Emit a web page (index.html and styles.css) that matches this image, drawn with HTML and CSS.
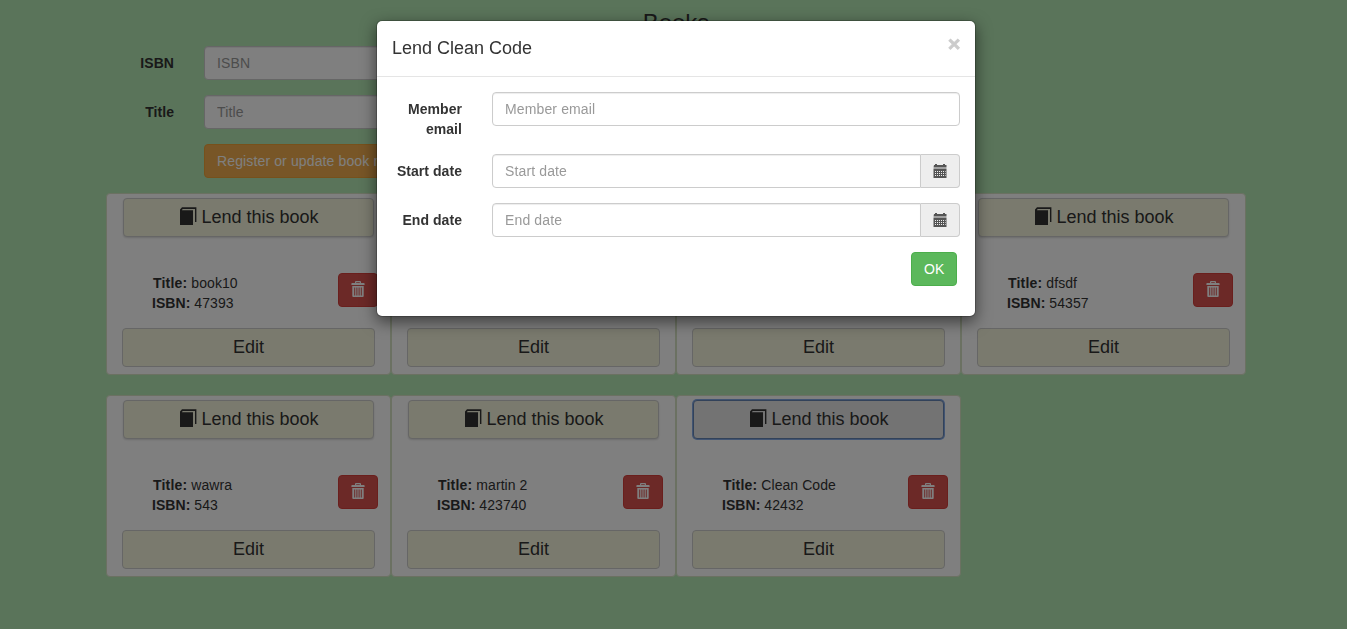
FILE: index.html
```html
<!DOCTYPE html>
<html lang="en">
<head>
<meta charset="utf-8">
<title>Books</title>
<link rel="stylesheet" href="styles.css">
</head>
<body>
<svg class="sprite" aria-hidden="true">
  <symbol id="book" viewBox="0 0 18 18"><path d="M1 2.6L3 .2H17.4V15H16V2H3.6L3 3.2H14V18H1Z"/></symbol>
  <symbol id="trash" viewBox="0 0 14 16"><path fill-rule="evenodd" d="M4 2V1Q4 0 5 0H9Q10 0 10 1V2H13Q13.6 2 13.6 3V4H.4V3Q.4 2 1 2ZM5.2 2H8.8V1.2H5.2ZM1.3 5H12.7V15Q12.7 16 11.8 16H2.2Q1.3 16 1.3 15ZM3.2 6.4V14.4H4.2V6.4ZM5.4 6.4V14.4H6.4V6.4ZM7.6 6.4V14.4H8.6V6.4ZM9.8 6.4V14.4H10.8V6.4Z"/></symbol>
  <symbol id="calendar" viewBox="0 0 14 14"><path fill-rule="evenodd" d="M1 1H2V0H4V1H10V0H12V1H13.5V3.6H.5ZM.5 4.6H13.5V14H.5ZM2 7V8H3V7ZM4 7V8H5V7ZM6 7V8H7V7ZM8 7V8H9V7ZM10 7V8H11V7ZM12 7V8H12.6V7ZM2 9V10H3V9ZM4 9V10H5V9ZM6 9V10H7V9ZM8 9V10H9V9ZM10 9V10H11V9ZM12 9V10H12.6V9ZM2 11V12H3V11ZM4 11V12H5V11ZM6 11V12H7V11ZM8 11V12H9V11ZM10 11V12H11V11ZM12 11V12H12.6V11Z"/></symbol>
</svg>
<main class="page">
  <h3 class="heading">Books</h3>
  <form class="book-form">
    <label class="label">ISBN</label><input class="control" placeholder="ISBN">
    <label class="label">Title</label><input class="control" placeholder="Title">
    <button class="btn btn-warning" type="button">Register or update book now</button>
  </form>
  <section class="books">
    <article class="card">
      <button class="wide lend"><svg class="i-book"><use href="#book"/></svg>Lend this book</button>
      <div class="info"><p><b class="key">Title:</b> book10<br><b>ISBN:</b> 47393</p><button class="btn btn-danger"><svg class="i-trash"><use href="#trash"/></svg></button></div>
      <button class="wide">Edit</button>
    </article>
    <article class="card card-short"><button class="wide">Edit</button></article>
    <article class="card card-short"><button class="wide">Edit</button></article>
    <article class="card">
      <button class="wide lend"><svg class="i-book"><use href="#book"/></svg>Lend this book</button>
      <div class="info"><p><b class="key">Title:</b> dfsdf<br><b>ISBN:</b> 54357</p><button class="btn btn-danger"><svg class="i-trash"><use href="#trash"/></svg></button></div>
      <button class="wide">Edit</button>
    </article>
    <article class="card">
      <button class="wide lend"><svg class="i-book"><use href="#book"/></svg>Lend this book</button>
      <div class="info"><p><b class="key">Title:</b> wawra<br><b>ISBN:</b> 543</p><button class="btn btn-danger"><svg class="i-trash"><use href="#trash"/></svg></button></div>
      <button class="wide">Edit</button>
    </article>
    <article class="card">
      <button class="wide lend"><svg class="i-book"><use href="#book"/></svg>Lend this book</button>
      <div class="info"><p><b class="key">Title:</b> martin 2<br><b>ISBN:</b> 423740</p><button class="btn btn-danger"><svg class="i-trash"><use href="#trash"/></svg></button></div>
      <button class="wide">Edit</button>
    </article>
    <article class="card">
      <button class="wide lend active"><svg class="i-book"><use href="#book"/></svg>Lend this book</button>
      <div class="info"><p><b class="key">Title:</b> Clean Code<br><b>ISBN:</b> 42432</p><button class="btn btn-danger"><svg class="i-trash"><use href="#trash"/></svg></button></div>
      <button class="wide">Edit</button>
    </article>
  </section>
</main>
<div class="backdrop"></div>
<div class="modal" role="dialog">
  <header class="modal-header"><h4 class="modal-title">Lend Clean Code</h4><button class="close">×</button></header>
  <form class="modal-body">
    <div class="row"><label class="label">Member email</label><input class="control" placeholder="Member email"></div>
    <div class="row"><label class="label">Start date</label><div class="group"><input class="control" placeholder="Start date"><span class="addon"><svg class="i-cal"><use href="#calendar"/></svg></span></div></div>
    <div class="row"><label class="label">End date</label><div class="group"><input class="control" placeholder="End date"><span class="addon"><svg class="i-cal"><use href="#calendar"/></svg></span></div></div>
    <div class="actions"><button class="btn btn-success" type="button">OK</button></div>
  </form>
</div>
</body>
</html>
```
FILE: styles.css
```css
* { box-sizing: border-box; }
body {
  margin: 0;
  height: 629px;
  overflow: hidden;
  background: #b5e9b5;
  color: #333;
  font: 14px/20px "Liberation Sans", Arial, sans-serif;
}
button, input { font: inherit; color: inherit; margin: 0; }
svg { fill: currentColor; }
.sprite { display: none; }
.page { width: 1140px; margin-left: 106px; padding-top: 10px; }
.heading { margin: 0 0 10px; font-size: 24px; line-height: 26px; font-weight: 500; text-align: center; }
.book-form { display: grid; grid-template-columns: 68px 467px; column-gap: 30px; row-gap: 15px; }
.label { padding-top: 7px; font-weight: bold; text-align: right; letter-spacing: .05px; }
.control {
  width: 100%;
  height: 34px;
  padding: 6px 12px;
  border: 1px solid #ccc;
  border-radius: 4px;
  background: #fff;
  box-shadow: inset 0 1px 1px rgba(0,0,0,.075);
}
.control::placeholder { color: #999; opacity: 1; letter-spacing: .13px; }
.btn { height: 34px; padding: 6px 12px; border: 1px solid; border-radius: 4px; color: #fff; }
.btn-warning { grid-column: 2; justify-self: start; background: #f0ad4e; border-color: #eea236; letter-spacing: .13px; }
.btn-danger { width: 40px; background: #d9534f; border-color: #d43f3a; }
.btn-success { width: 46px; background: #5cb85c; border-color: #4cae4c; }
.books { display: grid; grid-template-columns: repeat(4, 285px); row-gap: 20px; margin-top: 15px; }
.card {
  display: flex;
  flex-direction: column;
  height: 182px;
  padding: 4px 15px 7px;
  border: 1px solid #d6e3c4;
  border-radius: 4px;
  background: #fff;
}
.card-short { justify-content: flex-end; }
.wide {
  flex: none;
  height: 39px;
  padding: 0 0 2px;
  border: 1px solid #ccc;
  border-radius: 4px;
  background: #f5f5dc;
  font-size: 18px;
}
.lend { display: flex; align-items: center; justify-content: center; gap: 4px; margin: 0 1px; padding-left: 1px; box-shadow: 0 1px 2px rgba(0,0,0,.15); }
.lend.active { background: #e6e6e6; border-color: #6585b5; box-shadow: 0 0 0 1px #82a8e4; }
.i-book { width: 18px; height: 18px; margin-top: -2px; }
.info { display: flex; justify-content: space-between; height: 40px; margin: 36px -3px 15px 30px; }
.info p { margin: 0; letter-spacing: .06px; }
.key { margin-left: 1px; letter-spacing: .2px; }
.i-trash { display: block; width: 14px; height: 16px; margin-top: -3px; }
.backdrop { position: fixed; inset: 0; background: rgba(0,0,0,.5); }
.modal {
  position: absolute;
  left: 376px;
  top: 20px;
  width: 600px;
  height: 297px;
  border: 1px solid rgba(0,0,0,.2);
  border-radius: 6px;
  background: #fff;
  background-clip: padding-box;
  box-shadow: 0 5px 15px rgba(0,0,0,.5);
}
.modal-header { display: flex; justify-content: space-between; height: 56px; padding: 14px 15px; border-bottom: 1px solid #e5e5e5; }
.modal-title { margin: 0; font-size: 18px; line-height: 26px; font-weight: 500; }
.close { width: 12px; height: 21px; margin-top: -2px; padding: 0; border: 0; background: none; font-size: 21px; line-height: 21px; font-weight: bold; color: #000; -webkit-text-stroke: 1px #000; opacity: .2; }
.modal-body { display: flex; flex-direction: column; gap: 15px; padding: 15px; }
.row { display: grid; grid-template-columns: 70px 468px; column-gap: 30px; }
.row .control { align-self: start; }
.group { display: flex; }
.group .control { flex: 1; border-radius: 4px 0 0 4px; }
.addon { display: flex; align-items: center; justify-content: center; width: 39px; height: 34px; padding-right: 1px; border: 1px solid #ccc; border-left: 0; border-radius: 0 4px 4px 0; background: #eee; color: #555; }
.i-cal { width: 14px; height: 14px; }
.actions { display: flex; justify-content: flex-end; padding-right: 3px; }
```
